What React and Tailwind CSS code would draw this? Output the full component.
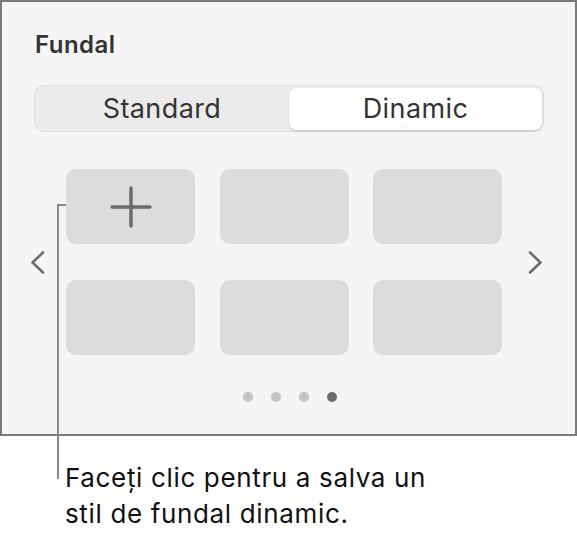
const font = { fontFamily: 'Inter, "Noto Sans", "Liberation Sans", sans-serif' };

function Chevron({ dir }) {
  const d = dir === 'left' ? 'M13 1.5 L2.5 11.5 L13 21.5' : 'M2 1.5 L12.5 11.5 L2 21.5';
  return (
    <svg width="15" height="23" viewBox="0 0 15 23" className="shrink-0">
      <path d={d} fill="none" stroke="#6e6e6e" strokeWidth="2.6" strokeLinecap="round" strokeLinejoin="round" />
    </svg>
  );
}

function Tile({ plus }) {
  return (
    <div className="w-[129px] h-[75px] rounded-[10px] bg-[#dcdcdc] flex items-center justify-center">
      {plus && (
        <svg width="42" height="42" viewBox="0 0 42 42">
          <path d="M21 2 V40 M2 21 H40" stroke="#6b6b6b" strokeWidth="3.4" strokeLinecap="round" />
        </svg>
      )}
    </div>
  );
}

export default function App() {
  return (
    <div className="relative w-[577px] h-[539px] bg-white" style={font}>
      <div className="w-[577px] h-[436px] bg-[#f5f5f5] border-2 border-[#7a7a7a] pt-[28px] px-[32px]">
        <div className="pl-[1px] text-[24px] leading-[29px] tracking-[0.02em] font-semibold text-[#333333]">Fundal</div>

        <div className="mt-[26px] w-[510px] h-[47px] rounded-[10px] bg-[#ebebeb] border border-[#dddddd] flex pt-[2px] pb-[1px] pr-[1px]">
          <div className="flex-1 flex items-center justify-center text-[27px] tracking-[0.015em] text-[#333333]">Standard</div>
          <div className="w-[253px] h-[42px] rounded-[8px] bg-white shadow-[0_1px_2px_rgba(0,0,0,0.15)] flex items-center justify-center text-[27px] tracking-[0.015em] text-[#333333]">
            Dinamic
          </div>
        </div>

        <div className="mt-[37px] -ml-[4px] flex items-center">
          <Chevron dir="left" />
          <div className="ml-[21px] grid grid-cols-3 gap-x-[25.5px] gap-y-[36px]">
            <Tile plus />
            <Tile />
            <Tile />
            <Tile />
            <Tile />
            <Tile />
          </div>
          <div className="ml-[27px]">
            <Chevron dir="right" />
          </div>
        </div>

        <div className="mt-[37px] flex gap-[18px] pl-[209px]">
          <div className="w-[10px] h-[10px] rounded-full bg-[#c4c4c4]" />
          <div className="w-[10px] h-[10px] rounded-full bg-[#c4c4c4]" />
          <div className="w-[10px] h-[10px] rounded-full bg-[#c4c4c4]" />
          <div className="w-[10px] h-[10px] rounded-full bg-[#6b6b6b]" />
        </div>
      </div>

      <div className="mt-[24px] pl-[65px] text-[26px] leading-[36px] tracking-[0.025em] text-[#111111]">
        Faceți clic pentru a salva un
        <br />
        stil de fundal dinamic.
      </div>

      <div className="absolute left-[57px] top-[204px] w-[2px] h-[275px] bg-[#8a8a8a]" />
      <div className="absolute left-[57px] top-[204px] w-[9px] h-[2px] bg-[#8a8a8a]" />
    </div>
  );
}
